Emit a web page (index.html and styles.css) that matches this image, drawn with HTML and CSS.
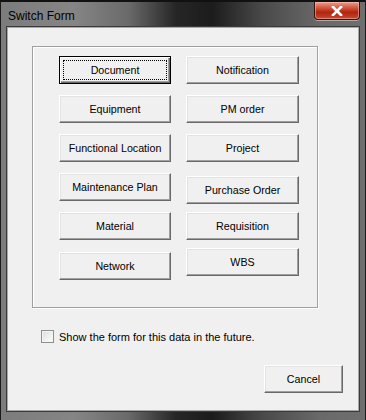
FILE: index.html
```html
<!DOCTYPE html>
<html lang="en">
<head>
  <meta charset="UTF-8" />
  <title>Switch Form</title>
  <link rel="stylesheet" href="styles.css">
</head>
<body>
  <div class="window">
    <div class="titlebar">
      <span class="title">Switch Form</span>
      <div class="close-btn">
        <svg width="16" height="10" viewBox="0 0 16 10">
          <path d="M4 1 L12 9 M12 1 L4 9" stroke="#fff" stroke-width="2.6" stroke-linecap="square" />
        </svg>
      </div>
    </div>
    <div class="client">
      <div class="group">
        <div class="btn-grid">
          <div class="btn default"><span class="focus">Document</span></div>
          <div class="btn">Notification</div>
          <div class="btn">Equipment</div>
          <div class="btn">PM order</div>
          <div class="btn">Functional Location</div>
          <div class="btn">Project</div>
          <div class="btn">Maintenance Plan</div>
          <div class="btn down3">Purchase Order</div>
          <div class="btn">Material</div>
          <div class="btn">Requisition</div>
          <div class="btn down1">Network</div>
          <div class="btn up3">WBS</div>
        </div>
      </div>
      <label class="check-row">
        <span class="checkbox"></span>
        Show the form for this data in the future.
      </label>
      <div class="footer">
        <div class="btn cancel">Cancel</div>
      </div>
    </div>
  </div>
</body>
</html>
```

FILE: styles.css
```css
body {
  margin: 0;
  background: #000;
  font-family: "Liberation Sans", Arial, sans-serif;
  font-size: 11px;
  color: #000;
}
.window {
  width: 366px;
  height: 420px;
  box-sizing: border-box;
  padding: 0 6px 9px 6px;
  background: linear-gradient(to right, #7c7c7c 0%, #858585 20%, #6a6a6a 35%, #262626 48%, #1c1c1c 58%, #4a4a4a 72%, #6a6a6a 88%, #6e6e6e 100%);
  border-top: 2px solid #111;
  border-left: 1px solid #1a1a1a;
  border-right: 1px solid #1a1a1a;
  display: flex;
  flex-direction: column;
}
.titlebar {
  height: 25px;
  display: flex;
  align-items: flex-start;
  justify-content: space-between;
}
.title {
  font-size: 12px;
  margin-top: 7px;
  margin-left: 1px;
  color: #000;
}
.close-btn {
  width: 46px;
  height: 18px;
  margin-right: -1px;
  box-sizing: border-box;
  border: 1px solid #3a1010;
  border-top: none;
  border-radius: 0 0 4px 4px;
  background: linear-gradient(to bottom, #e8a090 0%, #d04a30 40%, #b02410 60%, #c84a30 100%);
  box-shadow: inset 0 0 0 1px rgba(255,200,190,0.5), 0 1px 0 #aaa;
  display: flex;
  align-items: center;
  justify-content: center;
}
.client {
  flex: 1;
  background: #f0f0f0;
  border: 1px solid #a8a8a8;
  box-shadow: 0 0 0 1px #3a3a3a;
  display: flex;
  flex-direction: column;
}
.group {
  margin: 18px 0 0 24px;
  width: 286px;
  height: 262px;
  box-sizing: border-box;
  border: 1px solid #a0a0a0;
  box-shadow: inset 1px 1px 0 #fff, 1px 1px 0 #fff;
  padding: 9px 0 0 26px;
}
.btn-grid {
  display: grid;
  grid-template-columns: 112px 113px;
  grid-auto-rows: 28px;
  column-gap: 15px;
  row-gap: 11px;
}
.btn {
  height: 28px;
  box-sizing: border-box;
  background: #f0f0f0;
  border: 1px solid;
  border-color: #fff #696969 #696969 #fff;
  box-shadow: inset -1px -1px 0 #a0a0a0, inset 1px 1px 0 #e3e3e3;
  display: flex;
  align-items: center;
  justify-content: center;
  white-space: nowrap;
  font-size: 10.7px;
}
.btn.default {
  border: 1px solid #000;
  box-shadow: inset 1px 1px 0 #fff, inset -1px -1px 0 #696969, inset -2px -2px 0 #a0a0a0;
  padding: 3px;
}
.focus {
  flex: 1;
  align-self: stretch;
  display: flex;
  align-items: center;
  justify-content: center;
  border: 1px dotted #000;
}
.down3 { margin-top: 3px; }
.down1 { margin-top: 1px; }
.up3 { margin-top: -3px; }
.check-row {
  display: flex;
  align-items: center;
  margin: 22px 0 0 33px;
  gap: 5px;
}
.checkbox {
  width: 13px;
  height: 13px;
  box-sizing: border-box;
  border: 1px solid #8e8f8f;
  background: linear-gradient(135deg, #dcdcdc 0%, #f4f4f4 70%, #fff 100%);
  box-shadow: inset 0 0 0 1px #f4f4f4;
}
.footer {
  display: flex;
  justify-content: flex-end;
  margin: 22px 15px 0 0;
}
.cancel {
  width: 79px;
}
```
